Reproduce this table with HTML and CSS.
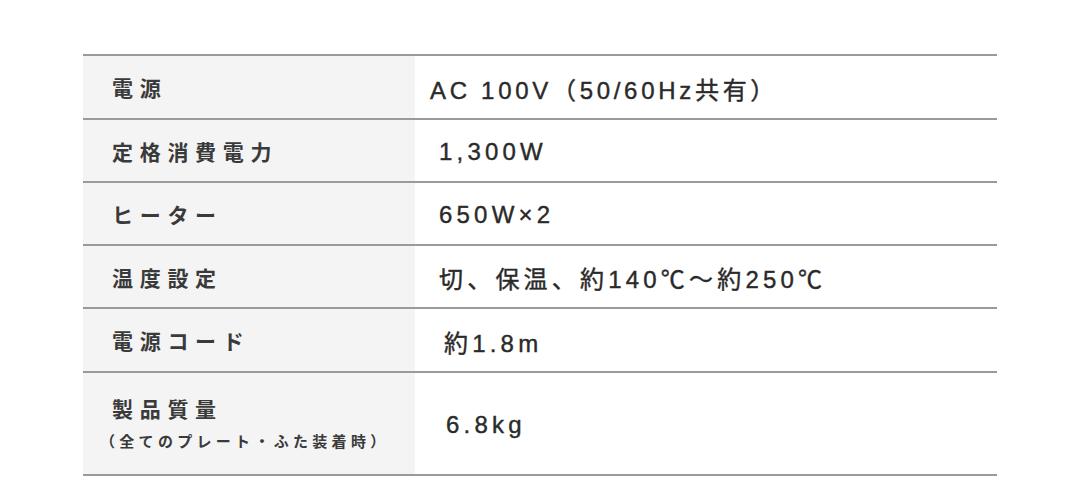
FILE: index.html
```html
<!DOCTYPE html>
<html lang="ja">
<head>
<meta charset="utf-8">
<link rel="stylesheet" href="styles.css">
</head>
<body>
<div class="wrap">
  <div class="spec">
    <div class="row r1"><div class="th">電源</div><div class="td v-ac">AC 100V（50/60Hz共有）</div></div>
    <div class="row"><div class="th">定格消費電力</div><div class="td">1,300W</div></div>
    <div class="row"><div class="th">ヒーター</div><div class="td">650W×2</div></div>
    <div class="row"><div class="th">温度設定</div><div class="td">切、保温、約140℃～約250℃</div></div>
    <div class="row r5"><div class="th">電源コード</div><div class="td v-cord">約1.8m</div></div>
    <div class="row r6"><div class="th"><span class="main">製品質量</span><span class="note">（全てのプレート・ふた装着時）</span></div><div class="td v-kg">6.8kg</div></div>
  </div>
</div>
</body>
</html>
```
FILE: styles.css
```css
html, body {
  margin: 0;
  padding: 0;
  background: #ffffff;
}
.wrap {
  padding: 54px 83px 0 83px;
  font-family: "Liberation Sans", "Noto Sans CJK JP", sans-serif;
  color: #363636;
}
.spec {
  width: 914px;
  border-top: 2px solid #9a9a9a;
}
.row {
  display: grid;
  grid-template-columns: 332px 1fr;
  height: 61px;
  border-bottom: 2px solid #9a9a9a;
}
.row.r1 { height: 62px; }
.row.r5 { height: 62px; }
.row.r6 { height: 101px; }
.th {
  background: #f4f4f4;
  display: flex;
  flex-direction: column;
  justify-content: center;
  padding-left: 29px;
  font-size: 21px;
  font-weight: 700;
  letter-spacing: 6.7px;
  color: #3a3a3a;
}
.th .main { line-height: 30px; }
.th .note {
  font-size: 15px;
  letter-spacing: 4.3px;
  margin-left: -12px;
  margin-top: 7px;
  line-height: 20px;
}
.td {
  display: flex;
  align-items: center;
  padding-left: 24px;
  padding-top: 2px;
  font-size: 24px;
  letter-spacing: 4.2px;
  font-weight: 400;
  color: #2a2a2a;
  -webkit-text-stroke: 0.4px #2a2a2a;
}
.td.v-ac { padding-left: 15px; letter-spacing: 3.7px; }
.td.v-cord { padding-left: 29px; }
.td.v-kg { padding-left: 31px; }
```
